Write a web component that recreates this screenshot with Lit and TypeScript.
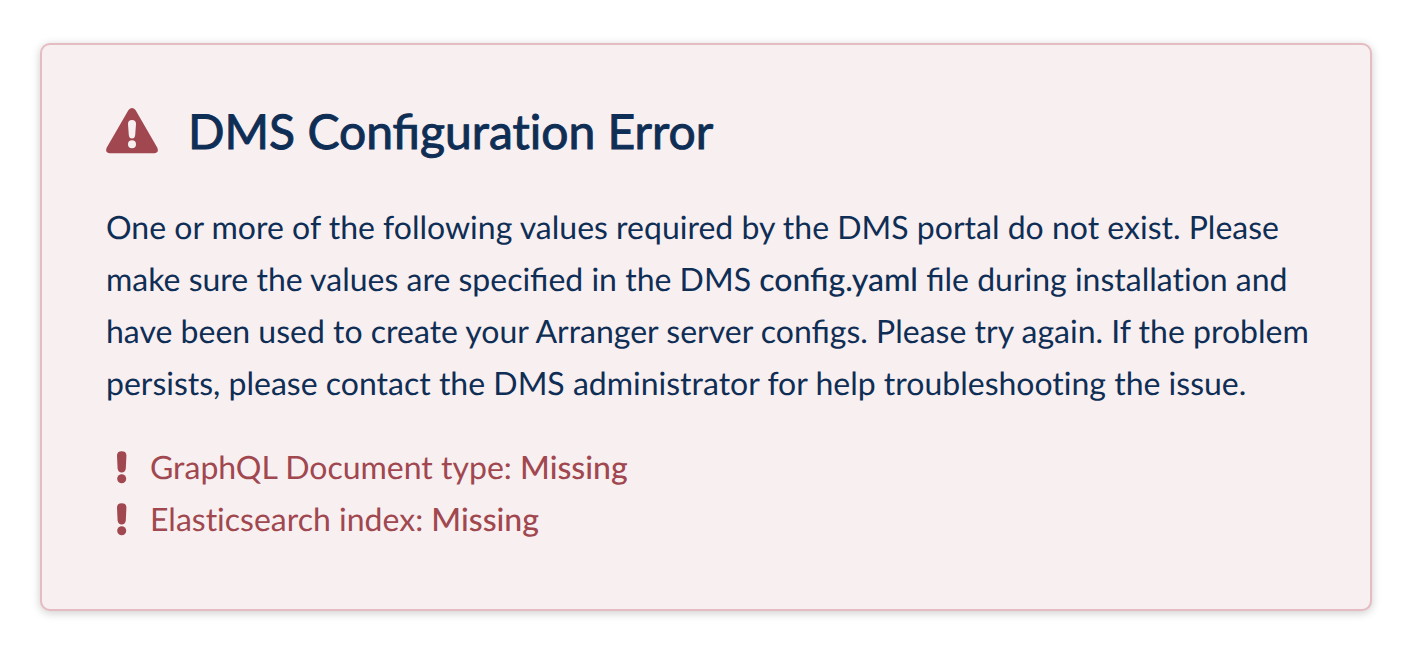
import { LitElement, html, css, TemplateResult } from "lit";
import { customElement } from "lit/decorators.js";

interface MissingValue {
  label: TemplateResult;
  status: string;
}

@customElement("app-root")
export class AppRoot extends LitElement {
  static styles = css`
    :host {
      display: block;
      padding: 43px 54px 51px 40px;
      background: #fff;
      color: #0f2e55;
      font-family: Lato, "Liberation Sans", sans-serif;
      font-size: 32px;
      font-weight: 400;
      line-height: 52px;
      text-rendering: geometricPrecision;
    }
    .card {
      padding: 58px 48px 64px 64px;
      border: 2px solid #e4bcc1;
      border-radius: 10px;
      background: #f8eff0;
      box-shadow: 0 2px 10px rgba(0, 0, 0, 0.2);
    }
    .header {
      display: flex;
      align-items: flex-start;
      gap: 30px;
    }
    .title {
      margin: 0;
      font-size: 48px;
      line-height: 58px;
      font-weight: 400;
      -webkit-text-stroke: 1px currentColor;
    }
    .plain {
      font-variant-ligatures: none;
    }
    .warning {
      width: 52px;
      height: 46px;
      margin-top: 5px;
      flex: none;
    }
    .icon {
      display: block;
      fill: #a0474f;
    }
    .message {
      margin: 40px 0 32px;
    }
    .strong {
      font-weight: 500;
    }
    .list {
      margin: 0;
      padding: 0;
      list-style: none;
      color: #a0474f;
    }
    .item {
      display: flex;
      align-items: center;
      gap: 22px;
      padding-left: 10px;
    }
    .mark {
      width: 12px;
      height: 34px;
      flex: none;
    }
  `;

  private values: MissingValue[] = [
    { label: html`GraphQL Document type`, status: "Missing" },
    { label: html`<span class="plain">Elasticsearch</span> index`, status: "Missing" },
  ];

  render() {
    return html`
      <section class="card" role="alert">
        <header class="header">
          <svg class="icon warning" viewBox="0 0 52 46" aria-hidden="true">
            <path fill-rule="evenodd" d="M22.500 2Q26-2 29.500 2L51.200 39.500Q53.500 45 48 45.200H4Q-1.500 45 .8 39.500ZM22 16L22.800 27Q23.200 30.500 26 30.500Q28.800 30.500 29.200 27L30 16Q30 12 26 12Q22 12 22 16ZM26 32.300A4 4 0 1 0 26 40.300A4 4 0 1 0 26 32.300Z"/>
          </svg>
          <h1 class="title">DMS Configu<span class="plain">ration</span> Error</h1>
        </header>
        <p class="message">
          One or more of the following values required by the DMS portal do not
          exist. Please make sure the values are specified in the DMS
          <strong class="strong">config.yaml</strong> file during
          <span class="plain">installation</span> and have been used to create
          your Arranger server configs. Please try again. If the problem
          persists, please contact the DMS administrator for help
          <span class="plain">troubleshooting</span> the issue.
        </p>
        <ul class="list">
          ${this.values.map(
            (value) => html`
              <li class="item">
                <svg class="icon mark" viewBox="0 0 12 34" aria-hidden="true">
                  <path d="M1 5.500Q1 1.200 5.700 1.200Q10.400 1.200 10.400 5.500L9.800 18.500Q9.200 22.500 5.700 22.500Q2.200 22.500 1.600 18.500Z"/>
                  <circle cx="5.700" cy="28.700" r="4.500"/>
                </svg>
                <span>${value.label}: <strong class="strong">${value.status}</strong></span>
              </li>
            `
          )}
        </ul>
      </section>
    `;
  }
}
